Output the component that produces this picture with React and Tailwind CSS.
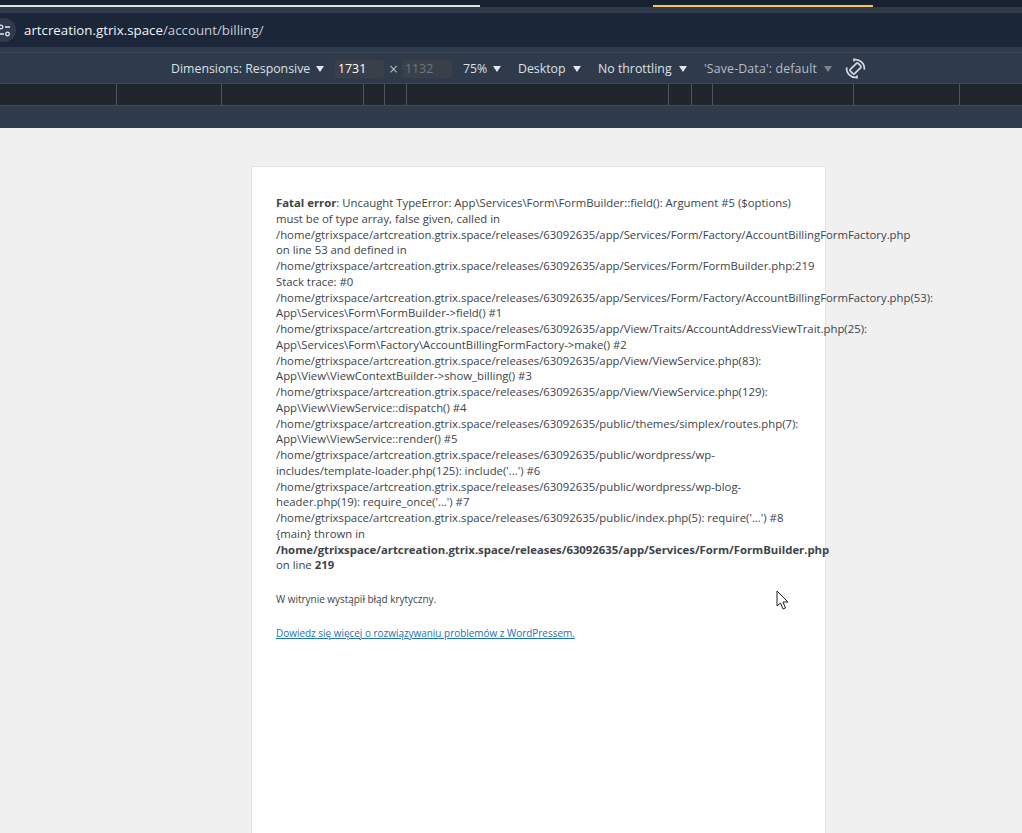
const sans = "font-['Open_Sans','Noto_Sans',sans-serif]";

const ruler = [116, 221, 363, 384, 406, 668, 691, 712, 853, 959];

const errorLines = [
  <><b className="font-bold">Fatal error</b>: Uncaught TypeError: App\Services\Form\FormBuilder::field(): Argument #5 ($options)</>,
  "must be of type array, false given, called in",
  "/home/gtrixspace/artcreation.gtrix.space/releases/63092635/app/Services/Form/Factory/AccountBillingFormFactory.php",
  "on line 53 and defined in",
  "/home/gtrixspace/artcreation.gtrix.space/releases/63092635/app/Services/Form/FormBuilder.php:219",
  "Stack trace: #0",
  "/home/gtrixspace/artcreation.gtrix.space/releases/63092635/app/Services/Form/Factory/AccountBillingFormFactory.php(53):",
  "App\\Services\\Form\\FormBuilder->field() #1",
  "/home/gtrixspace/artcreation.gtrix.space/releases/63092635/app/View/Traits/AccountAddressViewTrait.php(25):",
  "App\\Services\\Form\\Factory\\AccountBillingFormFactory->make() #2",
  "/home/gtrixspace/artcreation.gtrix.space/releases/63092635/app/View/ViewService.php(83):",
  "App\\View\\ViewContextBuilder->show_billing() #3",
  "/home/gtrixspace/artcreation.gtrix.space/releases/63092635/app/View/ViewService.php(129):",
  "App\\View\\ViewService::dispatch() #4",
  "/home/gtrixspace/artcreation.gtrix.space/releases/63092635/public/themes/simplex/routes.php(7):",
  "App\\View\\ViewService::render() #5",
  "/home/gtrixspace/artcreation.gtrix.space/releases/63092635/public/wordpress/wp-",
  "includes/template-loader.php(125): include('...') #6",
  "/home/gtrixspace/artcreation.gtrix.space/releases/63092635/public/wordpress/wp-blog-",
  "header.php(19): require_once('...') #7",
  "/home/gtrixspace/artcreation.gtrix.space/releases/63092635/public/index.php(5): require('...') #8",
  "{main} thrown in",
  <b className="font-bold">/home/gtrixspace/artcreation.gtrix.space/releases/63092635/app/Services/Form/FormBuilder.php</b>,
  <>on line <b className="font-bold">219</b></>,
];

function Caret({ className = "border-t-[#e3e8ee]" }) {
  return <span className={`inline-block shrink-0 w-0 h-0 border-x-[4px] border-x-transparent border-t-[6px] ${className}`} />;
}

function Toolbar() {
  return (
    <div className="h-[128px] shrink-0 flex flex-col bg-[#2f3b4b]">
      {/* tab strip */}
      <div className="h-[7px] bg-[#17212f] shrink-0 flex items-end">
        <div className="w-[480px] h-[2px] bg-[#dfe3e8]" />
        <div className="w-[173px]" />
        <div className="w-[220px] h-[2px] bg-[#f9c74f]" />
      </div>
      <div className="h-[6px] shrink-0" />
      {/* address bar */}
      <div className="h-[34px] bg-[#1b2738] shrink-0 flex items-center overflow-hidden">
        <div className="w-[16px] h-[24px] rounded-r-full bg-[#2f3b4b] flex items-center shrink-0">
          <svg width="11" height="13" viewBox="0 0 11 13" fill="none" stroke="#e3e8ee" strokeWidth="1.3">
            <circle cx="1" cy="3" r="1.8" />
            <path d="M5 3h5M0 10h4" />
            <circle cx="7.500" cy="10" r="1.800" />
          </svg>
        </div>
        <div className={`ml-[8px] mt-[1px] text-[13.3px] text-[#c3cdd9] ${sans}`}>
          <span className="text-[#f1f4f7]">artcreation.gtrix.space</span>/account/billing/
        </div>
      </div>
      <div className="h-[6px] shrink-0 border-b border-[#3d4856]" />
      {/* device toolbar */}
      <div className={`h-[30px] shrink-0 flex items-center whitespace-nowrap text-[12.33px] text-[#d8e0e8] pl-[171px] pt-[2px] ${sans}`}>
        <span className="w-[140px]">Dimensions: Responsive</span>
        <Caret className="border-t-[#e3e8ee] ml-[5px]" />
        <span className="ml-[11px] w-[49px] h-[18px] bg-[#3a4049] rounded-[3px] pl-[3px] leading-[18px] text-white">1731</span>
        <span className="ml-[5px] w-[9px] text-[16px] leading-none text-[#aeb6c0]">×</span>
        <span className="ml-[4px] w-[50px] h-[18px] bg-[#3a4049] rounded-[3px] pl-[3px] leading-[18px] text-[#6f7680]">1132</span>
        <span className="ml-[11px] w-[26px]">75%</span>
        <Caret className="border-t-[#e3e8ee] ml-[4px]" />
        <span className="ml-[17px] w-[49px]">Desktop</span>
        <Caret className="border-t-[#e3e8ee] ml-[6px]" />
        <span className="ml-[17px] w-[75px]">No throttling</span>
        <Caret className="border-t-[#e3e8ee] ml-[6px]" />
        <span className="ml-[17px] w-[113px] tracking-[0.15px] text-[#b4bdc8]">'Save-Data': default</span>
        <Caret className="border-t-[#7b838e] ml-[7px]" />
        <svg className="ml-[13px] -mt-[2px] shrink-0" width="21" height="21" viewBox="0 0 21 21" fill="none" stroke="#d4dae1" strokeWidth="1.7">
          <rect x="7.500" y="5" width="6" height="11" rx="1.200" transform="rotate(45 10.500 10.500)" />
          <path d="M9 1.700a9 9 0 0 1 10.300 10M12 19.300a9 9 0 0 1-10.300-10" />
          <path d="M9 .5v3M12 20.500v-3" />
        </svg>
      </div>
      {/* ruler */}
      <div className="h-[23px] shrink-0 bg-[#20252c] border-y border-[#414c5a] flex">
        {ruler.map((x, i) => (
          <span
            key={x}
            className="w-px h-full bg-[#4a5666]"
            style={{ marginLeft: i === 0 ? x : x - ruler[i - 1] - 1 }}
          />
        ))}
      </div>
    </div>
  );
}

export default function App() {
  return (
    <div className="h-[833px] overflow-hidden bg-[#f0f0f1] flex flex-col">
      <Toolbar />
      <div className="flex-1 pl-[251px] pt-[38px]">
        <div className={`w-[575px] h-[700px] bg-white border border-[#e3e4e6] pt-[28px] pl-[24px] text-[#3c434a] ${sans}`}>
          <div className="text-[11.33px] leading-[15.75px] whitespace-nowrap">
            {errorLines.map((line, i) => (
              <div key={i}>{line}</div>
            ))}
          </div>
          <p className="mt-[19px] text-[9.95px] leading-[15px]">W witrynie wystąpił błąd krytyczny.</p>
          <p className="mt-[19px] text-[9.95px] leading-[15px]">
            <a href="#" className="text-[#2271b1] underline">Dowiedz się więcej o rozwiązywaniu problemów z WordPressem.</a>
          </p>
        </div>
      </div>
      {/* mouse pointer from the capture */}
      <svg className="absolute left-[776px] top-[590px]" width="13" height="20" viewBox="0 0 13 20" fill="#fff" stroke="#222" strokeWidth="1">
        <path d="M1 1v15l3.500-3 2.500 6 2.500-1-2.500-6H12z" />
      </svg>
    </div>
  );
}
